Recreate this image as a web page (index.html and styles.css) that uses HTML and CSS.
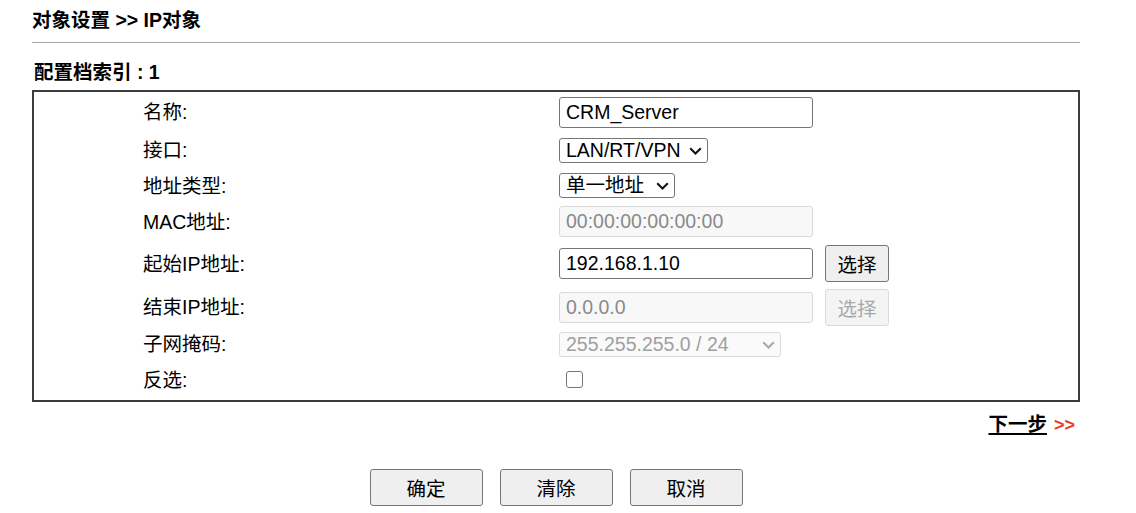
FILE: index.html
```html
<!DOCTYPE html>
<html lang="zh-CN">
<head>
<meta charset="utf-8">
<title>IP对象</title>
<link rel="stylesheet" href="styles.css">
</head>
<body>
<div class="page">
  <h1 class="title">对象设置 &gt;&gt; IP对象</h1>
  <div class="rule"></div>
  <h2 class="subtitle">配置档索引 : 1</h2>
  <div class="panel">
    <div class="row r1">
      <span class="label">名称:</span>
      <div class="field"><input class="text" type="text" value="CRM_Server"></div>
    </div>
    <div class="row r2">
      <span class="label">接口:</span>
      <div class="field">
        <span class="selwrap">
          <select class="sel sel-if"><option>LAN/RT/VPN</option></select>
          <svg class="chev" viewBox="0 0 13 8" width="13" height="8" aria-hidden="true"><path d="M1.2 1.2 L6.5 6.5 L11.8 1.2" fill="none" stroke="#111" stroke-width="2"/></svg>
        </span>
      </div>
    </div>
    <div class="row r3">
      <span class="label">地址类型:</span>
      <div class="field">
        <span class="selwrap">
          <select class="sel sel-type"><option>单一地址</option></select>
          <svg class="chev" viewBox="0 0 13 8" width="13" height="8" aria-hidden="true"><path d="M1.2 1.2 L6.5 6.5 L11.8 1.2" fill="none" stroke="#111" stroke-width="2"/></svg>
        </span>
      </div>
    </div>
    <div class="row r4">
      <span class="label">MAC地址:</span>
      <div class="field"><input class="text" type="text" value="00:00:00:00:00:00" disabled></div>
    </div>
    <div class="row r5">
      <span class="label">起始IP地址:</span>
      <div class="field"><input class="text" type="text" value="192.168.1.10"><button class="pick" type="button">选择</button></div>
    </div>
    <div class="row r6">
      <span class="label">结束IP地址:</span>
      <div class="field"><input class="text" type="text" value="0.0.0.0" disabled><button class="pick" type="button" disabled>选择</button></div>
    </div>
    <div class="row r7">
      <span class="label">子网掩码:</span>
      <div class="field">
        <span class="selwrap">
          <select class="sel sel-mask" disabled><option>255.255.255.0 / 24</option></select>
          <svg class="chev" viewBox="0 0 13 8" width="13" height="8" aria-hidden="true"><path d="M1.2 1.2 L6.5 6.5 L11.8 1.2" fill="none" stroke="#a8a8a8" stroke-width="2"/></svg>
        </span>
      </div>
    </div>
    <div class="row r8">
      <span class="label">反选:</span>
      <div class="field"><input class="check" type="checkbox"></div>
    </div>
  </div>
  <div class="next"><a class="next-link" href="#">下一步</a><span class="arrows">&gt;&gt;</span></div>
  <div class="actions">
    <button class="act" type="button">确定</button>
    <button class="act" type="button">清除</button>
    <button class="act" type="button">取消</button>
  </div>
</div>
</body>
</html>
```

FILE: styles.css
```css
* { box-sizing: border-box; }
html, body { margin: 0; padding: 0; background: #fff; }
body {
  font-family: "Liberation Sans", Arial, "Noto Sans CJK SC", sans-serif;
  color: #000;
}
.page {
  width: 1048px;
  margin-left: 32px;
  padding-top: 8px;
}
.title {
  margin: 0;
  font-size: 19.5px;
  line-height: 24px;
  font-weight: bold;
}
.rule {
  margin-top: 10px;
  height: 1px;
  background: #a8a8a8;
}
.subtitle {
  margin: 17px 0 0 2px;
  font-size: 19.5px;
  line-height: 24px;
  font-weight: bold;
}
.panel {
  margin-top: 6px;
  border: 2px solid #3c3c3c;
  display: grid;
  grid-template-columns: 416px 1fr;
  grid-template-rows: 40px 36px 35px 37px 47px 40px 34px 37px;
  padding: 0 0 2px 109px;
}
.row { display: contents; }
.label {
  display: flex;
  align-items: center;
  font-size: 19.5px;
  line-height: 24px;
}
.field {
  display: flex;
  align-items: center;
  gap: 12px;
}
.text {
  width: 254px;
  height: 31px;
  padding: 0 6px;
  border: 1px solid #767676;
  border-radius: 3px;
  font-family: inherit;
  font-size: 19.5px;
  color: #000;
  background: #fff;
  margin: 0;
}
.text:disabled {
  background: #f8f8f8;
  border-color: #d9d9d9;
  color: #8a8a8a;
}
.selwrap {
  position: relative;
  display: inline-flex;
}
.sel {
  appearance: none;
  -webkit-appearance: none;
  height: 25px;
  margin: 0;
  padding: 0 24px 0 6px;
  border: 1px solid #767676;
  border-radius: 3px;
  font-family: inherit;
  font-size: 19.5px;
  line-height: 23px;
  color: #000;
  background: #fff;
}
.chev {
  position: absolute;
  right: 6px;
  top: 9px;
  pointer-events: none;
}
.sel-if { width: 149px; }
.sel-type { width: 116px; }
.sel-mask { width: 222px; }
.sel:disabled {
  background: #fafafa;
  border-color: #dcdcdc;
  color: #a0a0a0;
  opacity: 1;
}
.pick {
  width: 64px;
  height: 37px;
  margin: 0;
  padding: 0;
  border: 1px solid #767676;
  border-radius: 3px;
  background: #efefef;
  font-family: inherit;
  font-size: 19.5px;
  color: #000;
}
.pick:disabled {
  background: #f4f4f4;
  border-color: #dadada;
  color: #a8a8a8;
}
.check {
  appearance: none;
  -webkit-appearance: none;
  width: 17px;
  height: 17px;
  margin: 0 0 0 7px;
  border: 1.5px solid #767676;
  border-radius: 3px;
  background: #fff;
}
.next {
  margin-top: 10px;
  padding-right: 5px;
  display: flex;
  justify-content: flex-end;
  align-items: baseline;
  gap: 7px;
  font-size: 19.5px;
  line-height: 24px;
}
.next-link {
  color: #000;
  font-weight: bold;
  text-decoration: underline;
  text-underline-offset: 2px;
  text-decoration-thickness: 2px;
}
.arrows {
  color: #e8401c;
  font-weight: bold;
  font-size: 18px;
}
.actions {
  margin-top: 32px;
  display: flex;
  justify-content: center;
  gap: 17px;
}
.act {
  width: 113px;
  height: 37px;
  margin: 0;
  padding: 0;
  border: 1px solid #767676;
  border-radius: 3px;
  background: #efefef;
  font-family: inherit;
  font-size: 19.5px;
  color: #000;
}
```
